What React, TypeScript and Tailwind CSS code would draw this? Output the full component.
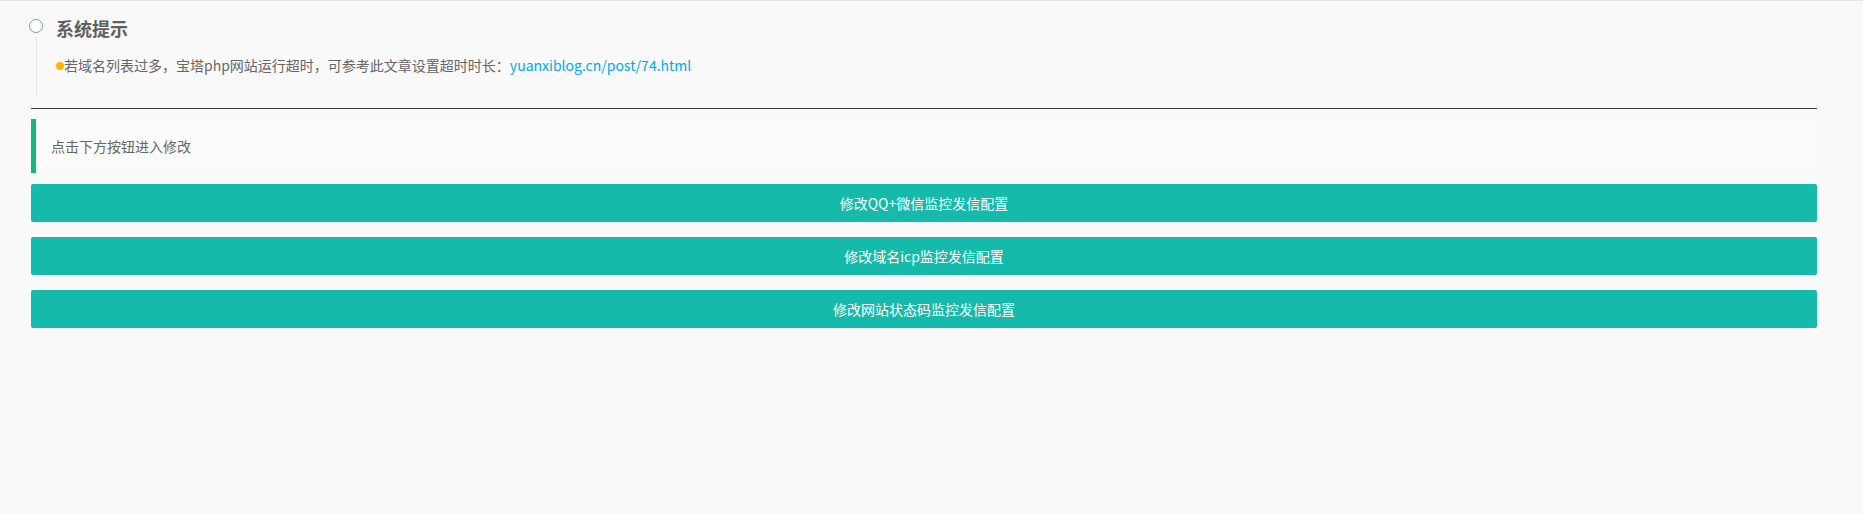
const buttons = ['修改QQ+微信监控发信配置', '修改域名icp监控发信配置', '修改网站状态码监控发信配置']

export default function App() {
  return (
    <div
      className="min-h-[514px] border-t border-[#e6e6e6] bg-[#f9f9f9] text-[14px] text-[#666]"
      style={{ fontFamily: '"Microsoft YaHei", "Noto Sans CJK SC", "Noto Sans", sans-serif' }}
    >
      <div className="flex pl-[29px] pt-[17px]">
        <div className="flex w-[14px] flex-col items-center">
          <div className="mt-[1px] h-[14px] w-[14px] rounded-full border-[1.5px] border-[#5fb878] bg-white" />
          <div className="mt-[4px] h-[60px] w-px bg-[#e6e6e6]" />
        </div>
        <div className="pl-[13px]">
          <h3 className="-mt-[4px] text-[18px] leading-[28px] font-bold text-[#5f5f5f]">系统提示</h3>
          <div className="mt-[12px] flex items-center leading-[22px]">
            <span className="mt-[1px] h-[8px] w-[8px] rounded-full bg-[#ffb800]" />
            <span>若域名列表过多，宝塔php网站运行超时，可参考此文章设置超时时长：</span>
            <a href="#" className="text-[#01aaed]">yuanxiblog.cn/post/74.html</a>
          </div>
        </div>
      </div>

      <div className="mt-[11px] mr-[46px] ml-[31px]">
        <hr className="border-t border-[#30363d]" />
        <div className="mt-[10px] border-l-[5px] border-[#16b777] bg-[#fbfbfb] px-[15px] py-[15px] leading-[24px]">
          点击下方按钮进入修改
        </div>
        <div className="mt-[11px] flex flex-col gap-[15px]">
          {buttons.map((b) => (
            <button
              key={b}
              className="h-[38px] w-full rounded-[2px] bg-[#16baaa] text-center text-[14px] text-white"
            >
              {b}
            </button>
          ))}
        </div>
      </div>
    </div>
  )
}
